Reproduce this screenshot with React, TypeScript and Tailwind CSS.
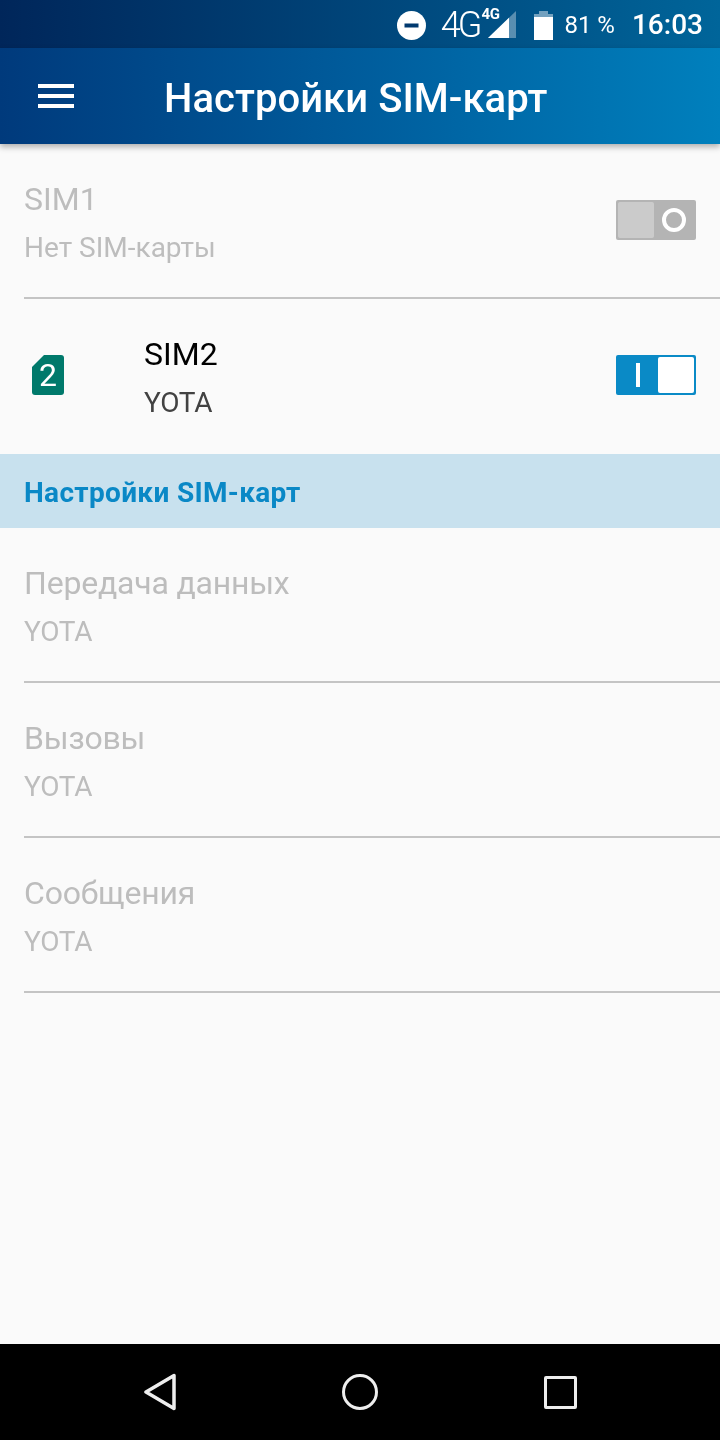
import type { ReactNode } from 'react'

const ROBOTO = "font-['Roboto',sans-serif]"

function Row({ title, sub, dim, icon, right, h = 'h-[153px]', narrow, textPad = 'pt-[4px]', rowPad = '' }: { title: string; sub: string; dim?: boolean; icon?: ReactNode; right?: ReactNode; h?: string; narrow?: boolean; textPad?: string; rowPad?: string }) {
  return (
    <div className={`flex items-center ${h} ${rowPad} pl-6 pr-6`}>
      {icon}
      <div className={`flex-1 min-w-0 ${textPad}`}>
        <div className={`text-[32px] leading-[40px] ${narrow ? 'tracking-[-0.2px]' : ''} ${dim ? 'text-[#bdbdbd]' : 'text-black'}`}>{title}</div>
        <div className={`text-[28px] leading-[36px] mt-[11px] ${sub === 'YOTA' ? 'tracking-[-0.25px]' : ''} ${dim ? 'text-[#bdbdbd]' : 'text-[#424242]'}`}>{sub}</div>
      </div>
      {right}
    </div>
  )
}

function Divider() {
  return <div className="ml-6 h-[2px] bg-[#c4c4c4]" />
}

function SwitchOff() {
  return (
    <div className="flex w-20 h-10 rounded-[2px] bg-[#b4b4b4] p-[2px] items-stretch">
      <div className="w-9 rounded-[2px] bg-[#cbcbcb]" />
      <div className="flex-1 flex items-center justify-center">
        <div className="w-6 h-6 rounded-full border-[4px] border-white" />
      </div>
    </div>
  )
}

function SwitchOn() {
  return (
    <div className="flex w-20 h-10 rounded-[2px] bg-[#0a8ac6] p-[2px] items-stretch">
      <div className="flex-1 flex items-center justify-center">
        <div className="w-1 h-6 bg-white" />
      </div>
      <div className="w-9 rounded-[2px] bg-white" />
    </div>
  )
}

function SimIcon() {
  return (
    <div className="w-[120px] shrink-0 pl-2">
      <div className="relative w-8 h-10 flex items-center justify-center">
        <svg width="32" height="40" viewBox="0 0 32 40" className="absolute inset-0">
          <path d="M12 0H29a3 3 0 0 1 3 3V37a3 3 0 0 1-3 3H3a3 3 0 0 1-3-3V12Z" fill="#00796b" />
        </svg>
        <span className="relative text-[32px] leading-none text-white">2</span>
      </div>
    </div>
  )
}

function StatusBar() {
  return (
    <div className="h-12 shrink-0 flex items-center justify-end pt-[2px] bg-gradient-to-r from-[#00265a] to-[#00659a] text-white">
      <svg width="29" height="29" viewBox="0 0 29 29" className="mr-[15px]">
        <circle cx="14.5" cy="14.5" r="14.5" fill="#fff" />
        <rect x="7.5" y="12.5" width="14" height="4" fill="#00396f" />
      </svg>
      <span className="text-[36px] leading-none font-light tracking-[-3px] mr-[2px]">4G</span>
      <div className="relative w-[36px] h-[34px] mr-[17px]">
        <span className="absolute left-0 top-[-3px] text-[15px] leading-[18px] font-bold tracking-[-0.3px]">4G</span>
        <svg width="28" height="27" viewBox="0 0 28 27" className="absolute left-[7px] top-[3px]">
          <path d="M0 27L28 0V27Z" fill="#fff" fillOpacity="0.35" />
          <path d="M0 27L21 6.75V27Z" fill="#fff" />
        </svg>
      </div>
      <svg width="19" height="29" viewBox="0 0 19 29" className="mr-[11px]">
        <path d="M5 0H14V3H19V6H0V3H5Z" fill="#fff" fillOpacity="0.45" />
        <rect x="0" y="6" width="19" height="23" fill="#fff" />
      </svg>
      <span className="text-[24px] leading-none mr-[17px]">81 %</span>
      <span className="text-[28px] leading-none font-medium mr-[17px]">16:03</span>
    </div>
  )
}

export default function App() {
  return (
    <div className={`${ROBOTO} w-[720px] h-[1440px] flex flex-col bg-[#fafafa] overflow-hidden will-change-transform`}>
      <StatusBar />
      <div className="relative z-10 h-24 shrink-0 flex items-center bg-gradient-to-r from-[#003a7c] to-[#0080bd] shadow-[0_3px_6px_rgba(0,0,0,0.3)]">
        <div className="w-[164px] pl-[38px] shrink-0 flex flex-col gap-[6px]">
          <div className="w-9 h-1 bg-white" />
          <div className="w-9 h-1 bg-white" />
          <div className="w-9 h-1 bg-white" />
        </div>
        <span className="pt-[6px] text-[40px] leading-none font-medium tracking-[0.05px] text-white">Настройки SIM-карт</span>
      </div>

      <div className="flex-1 flex flex-col">
        <Row title="SIM1" sub="Нет SIM-карты" dim right={<SwitchOff />} rowPad="pb-[1px]" textPad="pt-[5px]" />
        <Divider />
        <div className="h-[155px] flex items-center pb-[3px] pl-6 pr-6">
          <SimIcon />
          <div className="flex-1 min-w-0 pt-[5px]">
            <div className="text-[32px] leading-[40px] text-black">SIM2</div>
            <div className="text-[28px] leading-[36px] mt-[11px] tracking-[-0.25px] text-[#424242]">YOTA</div>
          </div>
          <SwitchOn />
        </div>
        <div className="h-[74px] flex items-center pt-[3px] px-6 bg-[#c8e1ee] text-[28px] font-bold tracking-[0.33px] text-[#0a88c6]">Настройки SIM-карт</div>
        <Row title="Передача данных" sub="YOTA" dim narrow />
        <Divider />
        <Row title="Вызовы" sub="YOTA" dim narrow />
        <Divider />
        <Row title="Сообщения" sub="YOTA" dim narrow />
        <Divider />
      </div>

      <div className="h-24 shrink-0 bg-black flex items-center justify-between pl-[144px] pr-[143px]">
        <svg width="32" height="38" viewBox="0 0 32 38">
          <path d="M30 2.5V35.5L2 19Z" fill="none" stroke="#eeeeee" strokeWidth="3.5" strokeLinejoin="round" />
        </svg>
        <div className="w-9 h-9 rounded-full border-[3.5px] border-[#eeeeee]" />
        <div className="w-[33px] h-[33px] rounded-[2px] border-[3.5px] border-[#eeeeee]" />
      </div>
    </div>
  )
}
